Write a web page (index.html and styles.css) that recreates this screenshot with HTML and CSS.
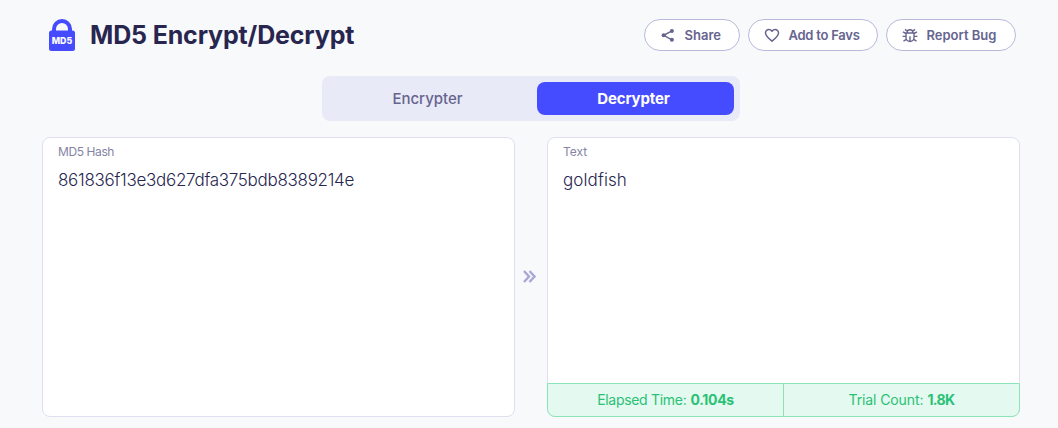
FILE: index.html
```html
<!DOCTYPE html>
<html lang="en">
<head>
<meta charset="utf-8">
<title>MD5 Encrypt/Decrypt</title>
<link rel="stylesheet" href="styles.css">
</head>
<body>
<header class="header">
  <svg class="logo" width="28" height="34" viewBox="0 0 28 34">
    <path d="M6 14V11a8 8 0 0 1 16 0V14" fill="none" stroke="#454bff" stroke-width="4"/>
    <rect x="1" y="12.5" width="26" height="20.5" rx="2.5" fill="#454bff"/>
    <text class="logo-text" x="14" y="26.3" text-anchor="middle" textLength="20.5" lengthAdjust="spacingAndGlyphs">MD5</text>
  </svg>
  <h1 class="title">MD5 Encrypt/Decrypt</h1>
  <div class="actions">
    <button class="action share">
      <svg width="16" height="16" viewBox="0 0 16 16" fill="#66648f"><path d="M12 3.8 3.7 8.3l8.300 4.500" fill="none" stroke="#66648f" stroke-width="1.5"/><circle cx="11.9" cy="3.9" r="2"/><circle cx="3.600" cy="8.300" r="2"/><circle cx="11.900" cy="12.700" r="2"/></svg>
      <span>Share</span>
    </button>
    <button class="action favs">
      <svg width="16" height="16" viewBox="0 0 16 16" fill="none" stroke="#66648f" stroke-width="1.5" stroke-linejoin="round"><path d="M8 14.200C4.200 11.100 1.500 8.800 1.500 6A3.350 3.350 0 0 1 4.900 2.600C6.200 2.600 7.300 3.300 8 4.300 8.700 3.300 9.800 2.600 11.100 2.600A3.350 3.350 0 0 1 14.500 6C14.500 8.800 11.800 11.100 8 14.200Z"/></svg>
      <span>Add to Favs</span>
    </button>
    <button class="action report">
      <svg width="16" height="16" viewBox="0 0 16 16" fill="none" stroke="#66648f" stroke-width="1.4"><path d="M4 6H12V10.500A4 4 0 0 1 4 10.500ZM5.200 5.700V5.300A2.800 2.600 0 0 1 10.800 5.300V5.700M8 9.200V14.200M3 2.400 5.500 4.500M13 2.400 10.500 4.500M1 4.900 4 6.700M15 4.900 12 6.700M.6 9.400H4M15.400 9.400H12M1.500 14.200 4.700 12.200M14.500 14.200 11.300 12.200"/></svg>
      <span>Report Bug</span>
    </button>
  </div>
</header>
<nav class="tabs">
  <div class="tab"><span class="encrypter">Encrypter</span></div>
  <div class="tab active"><span class="decrypter">Decrypter</span></div>
</nav>
<main class="panels">
  <section class="panel">
    <div class="label hash-label">MD5 Hash</div>
    <div class="value hash">861836f13e3d627dfa375bdb8389214e</div>
  </section>
  <svg class="arrow" width="16" height="16" viewBox="0 0 16 16" fill="none" stroke="#aba9d4" stroke-width="2.5"><path d="m2 2 5 5.500-5 5.500M7.500 2 12.500 7.500l-5 5.500"/></svg>
  <section class="panel output">
    <div class="label text-label">Text</div>
    <div class="value word">goldfish</div>
    <footer class="stats">
      <div class="stat"><span class="elapsed">Elapsed Time:</span><b class="seconds">0.104s</b></div>
      <div class="stat"><span class="trial">Trial Count:</span><b class="count">1.8K</b></div>
    </footer>
  </section>
</main>
</body>
</html>
```
FILE: styles.css
```css
* { box-sizing: border-box; }
body {
  margin: 0;
  height: 428px;
  overflow: hidden;
  background: #f8f9fb;
  font-family: Inter, "Liberation Sans", sans-serif;
  color: #28264f;
}
.header {
  display: flex;
  align-items: center;
  height: 76px;
  padding: 0 42px 6px 48px;
}
.logo { flex: none; margin-right: 14px; }
.logo-text { font: 800 9.5px Inter, sans-serif; fill: #fff; }
.title {
  margin: 0;
  font-size: 25px;
  line-height: 32px;
  font-weight: 650;
  letter-spacing: -0.15px;
  white-space: nowrap;
}
.actions { display: flex; gap: 8px; margin-left: auto; }
.action {
  display: flex;
  align-items: center;
  gap: 8.5px;
  height: 32px;
  padding: 0 0 0 15px;
  border: 1px solid #bbb8dc;
  border-radius: 16px;
  background: #fff;
  color: #66648f;
  font: 600 13px Inter, sans-serif;
  white-space: nowrap;
}
.share { width: 96px; }
.favs { width: 130px; letter-spacing: -0.25px; }
.report { width: 130px; }
.tabs {
  display: grid;
  grid-template-columns: 1fr 197px;
  width: 418px;
  height: 45px;
  margin-left: 322px;
  padding: 6px;
  border-radius: 8px;
  background: #e9eaf7;
}
.tab {
  display: flex;
  align-items: center;
  justify-content: center;
  padding-right: 10px;
  color: #66648f;
  font-size: 15px;
  font-weight: 500;
}
.tab.active {
  padding-right: 4px;
  border-radius: 8px;
  background: #454bff;
  color: #fff;
  font-weight: 700;
  letter-spacing: -0.15px;
}
.panels {
  display: grid;
  grid-template-columns: 473px 32px 473px;
  height: 280px;
  margin: 16px 38px 0 42px;
}
.panel {
  display: flex;
  flex-direction: column;
  padding: 6px 15px;
  border: 1px solid #e0dff0;
  border-radius: 8px;
  background: #fff;
  white-space: nowrap;
}
.label { font-size: 12px; line-height: 16px; color: #8583a6; }
.hash-label { letter-spacing: -0.4px; }
.value { margin-top: 7px; font-size: 17px; line-height: 26px; font-weight: 350; }
.hash { letter-spacing: -0.29px; }
.word { letter-spacing: 0.1px; }
.arrow { align-self: center; margin-left: 7px; }
.stats {
  display: grid;
  grid-template-columns: 236px 1fr;
  height: 34px;
  margin: auto -16px -7px;
  padding-bottom: 1px;
  border: 1px solid #8be5b9;
  border-radius: 0 0 8px 8px;
  background: #e4f9ef;
  color: #2ac176;
  font-size: 14px;
}
.stat { display: flex; align-items: center; justify-content: center; gap: 4px; }
.stat:first-child { border-right: 1px solid #8be5b9; margin-bottom: -1px; padding-bottom: 1px; }
.elapsed { letter-spacing: -0.3px; }
.seconds { letter-spacing: -0.3px; }
.trial { letter-spacing: -0.1px; }
.count { letter-spacing: -0.6px; }
```
